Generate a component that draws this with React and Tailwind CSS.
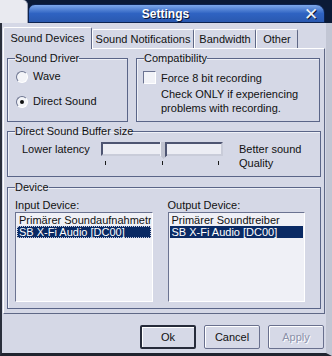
import React from "react";

// ---- small pieces ----------------------------------------------------------

function Radio({ checked, label }) {
  return (
    <div className="flex items-center h-[13px]">
      <span className="w-[12px] h-[12px] rounded-full bg-[#f3f4f8] border border-t-[#6d7590] border-l-[#6d7590] border-r-[#ffffff] border-b-[#ffffff] flex items-center justify-center">
        {checked && <span className="w-[4px] h-[4px] rounded-full bg-[#111]" />}
      </span>
      <span className="ml-[5px]">{label}</span>
    </div>
  );
}

function Group({ title, className = "", children }) {
  return (
    <fieldset
      className={`border border-[#5a6588] shadow-[inset_1px_1px_0_#eef0f7] px-[6px] min-w-0 ${className}`}
    >
      <legend className="ml-[1px] px-0 leading-[13px] text-[#111]">
        {title}
      </legend>
      {children}
    </fieldset>
  );
}

function Tab({ children, active, width }) {
  return (
    <div
      className={`${width} flex items-center justify-center border border-b-0 border-t-[#ffffff] border-l-[#ffffff] border-r-[#5f6886] rounded-t-[2px] ${
        active ? "h-[22px] mb-[-1px] z-10 bg-[#d5d8e6]" : "h-[19px]"
      }`}
    >
      {children}
    </div>
  );
}

function ListBox({ items, selected, focused }) {
  return (
    <div className="h-[90px] bg-[#eff0f6] border border-t-[#6b7391] border-l-[#6b7391] border-r-[#ffffff] border-b-[#ffffff] pt-[1px] px-[1px] overflow-hidden">
      {items.map((it, i) => (
        <div
          key={it}
          className={`h-[12px] leading-[12px] px-[2px] whitespace-nowrap overflow-hidden ${
            i === selected
              ? "bg-[#0a2a64] text-white" +
                (focused ? " outline-1 outline-dotted outline-[#c8cde0] -outline-offset-1" : "")
              : "text-[#111]"
          }`}
        >
          {it}
        </div>
      ))}
    </div>
  );
}

function Button({ children, primary, disabled }) {
  return (
    <button
      className={`w-[56px] h-[24px] rounded-[2px] bg-[#d6d9e7] shadow-[inset_1px_1px_0_#ffffff] ${
        primary ? "border-2 border-[#262b3a]" : "border border-[#69708e]"
      } ${disabled ? "text-[#8b91aa] [text-shadow:1px_1px_0_#ffffff]" : "text-[#111]"}`}
    >
      {children}
    </button>
  );
}

// ---- window ----------------------------------------------------------------

export default function App() {
  return (
    <div className="w-[332px] h-[356px] bg-[#0b1a36] flex flex-col overflow-hidden [font-family:'Liberation_Sans',Arial,sans-serif] text-[11px]">
      {/* TITLE ROW */}
      <div className="flex h-[23px] shrink-0">
        <div className="w-[28px] h-full bg-[#e9eaf0] rounded-tr-[5px] border-r border-[#9aa0b4]" />
        <div className="flex-1 mt-[4px] mr-[7px] rounded-tl-[7px] rounded-tr-[9px] border border-[#0d2350] bg-gradient-to-b from-[#7ea8ea] via-[#2f63c2] to-[#2a59b0] flex items-center relative">
          <span className="flex-1 text-center pr-[22px] font-bold text-[12px] text-white [text-shadow:1px_1px_0_#0a1530]">
            Settings
          </span>
          <span className="absolute right-[6px] top-[1px] text-[17px] leading-[17px] text-[#eef2fb] [text-shadow:1px_1px_0_#0a1530]">
            ✕
          </span>
        </div>
      </div>

      {/* BODY */}
      <div className="flex-1 flex flex-col bg-[#d5d8e6] border-l-2 border-l-[#2a2f3c] border-b-[3px] border-b-[#20242f] border-r-[6px] border-r-[#c2c6d4] pt-[4px] pl-[1px] pr-[1px]">
        {/* TABS */}
        <div className="flex items-end h-[21px] text-[#111]">
          <Tab active width="w-[89px]">Sound Devices</Tab>
          <Tab width="w-[102px]">Sound Notifications</Tab>
          <Tab width="w-[62px]">Bandwidth</Tab>
          <Tab width="w-[42px]">Other</Tab>
        </div>

        {/* TAB PANEL */}
        <div className="h-[266px] border border-t-[#ffffff] border-l-[#ffffff] border-r-[#5f6886] border-b-[#5f6886] px-[3px] pt-[3px] flex flex-col gap-[3px]">
          <div className="flex gap-[8px]">
            <Group title="Sound Driver" className="w-[121px] h-[70px]">
              <div className="pt-[5px] pl-[2px] flex flex-col gap-[12px] text-[#111]">
                <Radio label="Wave" />
                <Radio label="Direct Sound" checked />
              </div>
            </Group>
            <Group title="Compatibility" className="w-[184px] h-[70px]">
              <div className="flex gap-[5px] pt-[6px] text-[#111]">
                <span className="w-[13px] h-[13px] shrink-0 bg-[#f1f2f7] border border-t-[#6b7391] border-l-[#6b7391] border-r-[#ffffff] border-b-[#ffffff]" />
                <div className="leading-[14px]">
                  <div>Force 8 bit recording</div>
                  <div className="mt-[2px]">Check ONLY if experiencing</div>
                  <div>problems with recording.</div>
                </div>
              </div>
            </Group>
          </div>

          <Group title="Direct Sound Buffer size" className="h-[52px]">
            <div className="flex pl-[8px] pt-[4px] text-[#111]">
              <span className="w-[79px] leading-[14px]">Lower latency</span>
              <div className="w-[122px] flex flex-col">
                <div className="relative h-[14px] bg-[#ecedf4] border-2 border-t-[#4e5572] border-l-[#4e5572] border-r-[#c9ccd9] border-b-[#c9ccd9]">
                  <span className="absolute left-[57px] -top-[2px] w-[7px] h-[17px] bg-[#bfc2cf] border-l border-l-[#eef0f6] border-r-2 border-r-[#4e5572] [clip-path:polygon(0_0,100%_0,100%_78%,50%_100%,0_78%)]" />
                </div>
                <div className="flex justify-between px-[4px] mt-[5px] h-[4px]">
                  <div className="w-[1px] h-[4px] bg-[#1a1a1a]" />
                  <div className="w-[1px] h-[4px] bg-[#1a1a1a]" />
                  <div className="w-[1px] h-[4px] bg-[#1a1a1a]" />
                </div>
              </div>
              <div className="ml-[16px] leading-[14px]">
                <div>Better sound</div>
                <div>Quality</div>
              </div>
            </div>
          </Group>

          <Group title="Device" className="h-[128px] mt-[1px]">
            <div className="flex gap-[15px] pl-[1px] pr-[9px] pt-[4px] text-[#111]">
              <div className="flex-1 min-w-0">
                <div className="leading-[14px]">Input Device:</div>
                <ListBox
                  items={["Primärer Soundaufnahmetreiber", "SB X-Fi Audio [DC00]"]}
                  selected={1}
                  focused
                />
              </div>
              <div className="flex-1 min-w-0">
                <div className="leading-[14px]">Output Device:</div>
                <ListBox
                  items={["Primärer Soundtreiber", "SB X-Fi Audio [DC00]"]}
                  selected={1}
                />
              </div>
            </div>
          </Group>
        </div>

        {/* BUTTONS */}
        <div className="flex justify-end gap-[8px] mt-[11px] pr-[1px]">
          <Button primary>Ok</Button>
          <Button>Cancel</Button>
          <Button disabled>Apply</Button>
        </div>
      </div>
    </div>
  );
}
